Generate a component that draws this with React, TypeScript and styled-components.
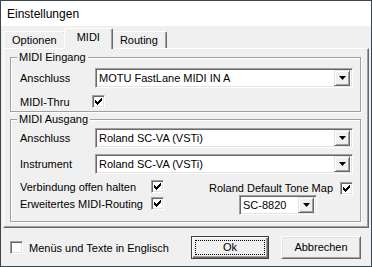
import styled, { createGlobalStyle } from "styled-components";

const GlobalStyle = createGlobalStyle`
  html, body {
    margin: 0;
    padding: 0;
    background: #f0f0f0;
  }
  body {
    font-family: "Liberation Sans", Arial, sans-serif;
    font-size: 11px;
    color: #000;
  }
`

const Window = styled.div`
  box-sizing: border-box;
  width: 372px;
  height: 267px;
  border: 1px solid #3b474e;
  display: flex;
  flex-direction: column;
  background: #f0f0f0;
`

const TitleBar = styled.div`
  height: 25px;
  display: flex;
  align-items: center;
  padding-left: 6px;
  background: #fff;
  font-size: 12px;
`

const Body = styled.div`
  flex: 1;
  display: flex;
  flex-direction: column;
  padding: 0 2px;
`

const TabStrip = styled.div`
  height: 22px;
  display: flex;
  align-items: flex-end;
  position: relative;
  z-index: 1;
`

const Tab = styled.div<{ $active?: boolean }>`
  box-sizing: border-box;
  height: ${props => props.$active ? '21px' : '17px'};
  margin-bottom: ${props => props.$active ? '-1px' : '0'};
  margin-left: ${props => props.$active ? '-2px' : '0'};
  margin-right: ${props => props.$active ? '-2px' : '0'};
  padding: ${props => props.$active ? '0 12px 4px' : '0 8px'};
  display: flex;
  align-items: center;
  background: #f0f0f0;
  border-top: 1px solid #fff;
  border-left: 1px solid #fff;
  border-right: 1px solid #696969;
  box-shadow: inset -1px 0 0 #a0a0a0;
  border-top-left-radius: 2px;
  border-top-right-radius: 2px;
  position: relative;
  z-index: ${props => props.$active ? 2 : 1};
`

const TabPanel = styled.div`
  box-sizing: border-box;
  height: 180px;
  border-top: 1px solid #fff;
  border-left: 1px solid #fff;
  border-right: 1px solid #696969;
  border-bottom: 1px solid #696969;
  box-shadow: inset -1px -1px 0 #a0a0a0;
  padding: 2px 7px 0 6px;
  display: flex;
  flex-direction: column;
`

const Group = styled.fieldset<{ $gapTop?: number }>`
  margin: ${props => props.$gapTop ?? 0}px 0 0 0;
  padding: 0 7px 0 9px;
  border: 1px solid #a0a0a0;
  box-shadow: inset 1px 1px 0 #fff, 1px 1px 0 #fff;
  min-width: 0;
`

const Legend = styled.legend`
  padding: 0 2px;
  margin-left: -3px;
  line-height: 13px;
  background: #f0f0f0;
`

const GroupContent = styled.div<{ $top: number; $bottom: number }>`
  display: flex;
  flex-direction: column;
  gap: 6px;
  padding-top: ${props => props.$top}px;
  padding-bottom: ${props => props.$bottom}px;
`

const FieldRow = styled.div<{ $height?: number }>`
  display: flex;
  align-items: center;
  height: ${props => props.$height ?? 20}px;
`

const Label = styled.span<{ $width?: number }>`
  width: ${props => props.$width ?? 75}px;
  flex-shrink: 0;
  white-space: nowrap;
`

const ComboBox = styled.div<{ $width?: number }>`
  box-sizing: border-box;
  height: 20px;
  ${props => props.$width ? `width: ${props.$width}px;` : 'flex: 1;'}
  display: flex;
  align-items: center;
  background: #fff;
  border: 1px solid;
  border-color: #a0a0a0 #fff #fff #a0a0a0;
  box-shadow: inset 1px 1px 0 #696969, inset -1px -1px 0 #e3e3e3;
  padding: 2px 2px 2px 3px;
`

const ComboText = styled.span`
  flex: 1;
  white-space: nowrap;
  overflow: hidden;
`

const DropButton = styled.div`
  box-sizing: border-box;
  width: 16px;
  height: 16px;
  flex-shrink: 0;
  display: flex;
  align-items: center;
  justify-content: center;
  background: #f0f0f0;
  border: 1px solid;
  border-color: #e3e3e3 #696969 #696969 #e3e3e3;
  box-shadow: inset 1px 1px 0 #fff, inset -1px -1px 0 #a0a0a0;
`

const Box = styled.span`
  box-sizing: border-box;
  width: 13px;
  height: 13px;
  flex-shrink: 0;
  display: inline-flex;
  align-items: center;
  justify-content: center;
  background: #fff;
  border: 1px solid;
  border-color: #a0a0a0 #fff #fff #a0a0a0;
  box-shadow: inset 1px 1px 0 #696969, inset -1px -1px 0 #e3e3e3;
`

const OptionsArea = styled.div`
  display: grid;
  grid-template-columns: auto 1fr;
  margin-top: -2px;
`

const OptionColumn = styled.div<{ $alignEnd?: boolean }>`
  display: flex;
  flex-direction: column;
  align-items: ${props => props.$alignEnd ? 'flex-end' : 'flex-start'};
  padding-top: ${props => props.$alignEnd ? '3px' : '0'};
`

const CheckRow = styled.div<{ $height?: number; $gap?: number }>`
  display: flex;
  align-items: center;
  height: ${props => props.$height ?? 17}px;
  gap: ${props => props.$gap ?? 0}px;
  white-space: nowrap;
`

const ToneCombo = styled.div`
  margin-right: 36px;
`

const Footer = styled.div`
  flex: 1;
  display: flex;
  align-items: center;
  padding: 0 8px 0 7px;
`

const FooterCheck = styled.div`
  flex: 1;
  display: flex;
  align-items: center;
  gap: 6px;
  margin-top: 1px;
`

const Buttons = styled.div`
  display: flex;
  gap: 12px;
`

const Button = styled.div<{ $default?: boolean; $width: number }>`
  box-sizing: border-box;
  width: ${props => props.$width}px;
  height: 23px;
  display: flex;
  align-items: center;
  justify-content: center;
  position: relative;
  background: #f0f0f0;
  border: 1px solid;
  border-color: ${props => props.$default ? '#404040' : '#fff #696969 #696969 #fff'};
  box-shadow: ${props => props.$default
    ? 'inset 1px 1px 0 #fff, inset -1px -1px 0 #696969, inset -2px -2px 0 #a0a0a0'
    : 'inset 1px 1px 0 #e3e3e3, inset -1px -1px 0 #a0a0a0'};
`

const FocusRing = styled.span`
  position: absolute;
  inset: 3px;
  border: 1px dotted #000;
`

const CheckMark = () => (
  <svg width="7" height="7" viewBox="0 0 7 7">
    <path d="M0 2h1v1h1v1h1V3h1V2h1V1h1V0h1v3H6v1H5v1H4v1H3v1H2V6H1V5H0z" fill="#000" />
  </svg>
)

const Arrow = () => (
  <svg width="7" height="4" viewBox="0 0 7 4">
    <path d="M0 0h7L3.5 4z" fill="#000" />
  </svg>
)

const CheckBox = ({ checked }: { checked?: boolean }) => (
  <Box>{checked && <CheckMark />}</Box>
)

const Combo = ({ value, width }: { value: string; width?: number }) => (
  <ComboBox $width={width}>
    <ComboText>{value}</ComboText>
    <DropButton><Arrow /></DropButton>
  </ComboBox>
)

export default function App() {
  return (
    <>
      <GlobalStyle />
      <Window>
        <TitleBar>Einstellungen</TitleBar>
        <Body>
          <TabStrip>
            <Tab>Optionen</Tab>
            <Tab $active>MIDI</Tab>
            <Tab>Routing</Tab>
          </TabStrip>
          <TabPanel>
            <Group>
              <Legend>MIDI Eingang</Legend>
              <GroupContent $top={4} $bottom={2}>
                <FieldRow>
                  <Label>Anschluss</Label>
                  <Combo value="MOTU FastLane MIDI IN A" />
                </FieldRow>
                <FieldRow $height={15}>
                  <Label $width={72}>MIDI-Thru</Label>
                  <CheckBox checked />
                </FieldRow>
              </GroupContent>
            </Group>
            <Group $gapTop={1}>
              <Legend>MIDI Ausgang</Legend>
              <GroupContent $top={2} $bottom={6}>
                <FieldRow>
                  <Label>Anschluss</Label>
                  <Combo value="Roland SC-VA (VSTi)" />
                </FieldRow>
                <FieldRow>
                  <Label>Instrument</Label>
                  <Combo value="Roland SC-VA (VSTi)" />
                </FieldRow>
                <OptionsArea>
                  <OptionColumn>
                    <CheckRow>
                      <Label $width={131}>Verbindung offen halten</Label>
                      <CheckBox checked />
                    </CheckRow>
                    <CheckRow>
                      <Label $width={131}>Erweitertes MIDI-Routing</Label>
                      <CheckBox checked />
                    </CheckRow>
                  </OptionColumn>
                  <OptionColumn $alignEnd>
                    <CheckRow $height={14} $gap={7}>
                      Roland Default Tone Map
                      <CheckBox checked />
                    </CheckRow>
                    <ToneCombo>
                      <Combo value="SC-8820" width={78} />
                    </ToneCombo>
                  </OptionColumn>
                </OptionsArea>
              </GroupContent>
            </Group>
          </TabPanel>
          <Footer>
            <FooterCheck>
              <CheckBox />
              Menüs und Texte in Englisch
            </FooterCheck>
            <Buttons>
              <Button $default $width={78}>
                <FocusRing />
                Ok
              </Button>
              <Button $width={80}>Abbrechen</Button>
            </Buttons>
          </Footer>
        </Body>
      </Window>
    </>
  )
}
